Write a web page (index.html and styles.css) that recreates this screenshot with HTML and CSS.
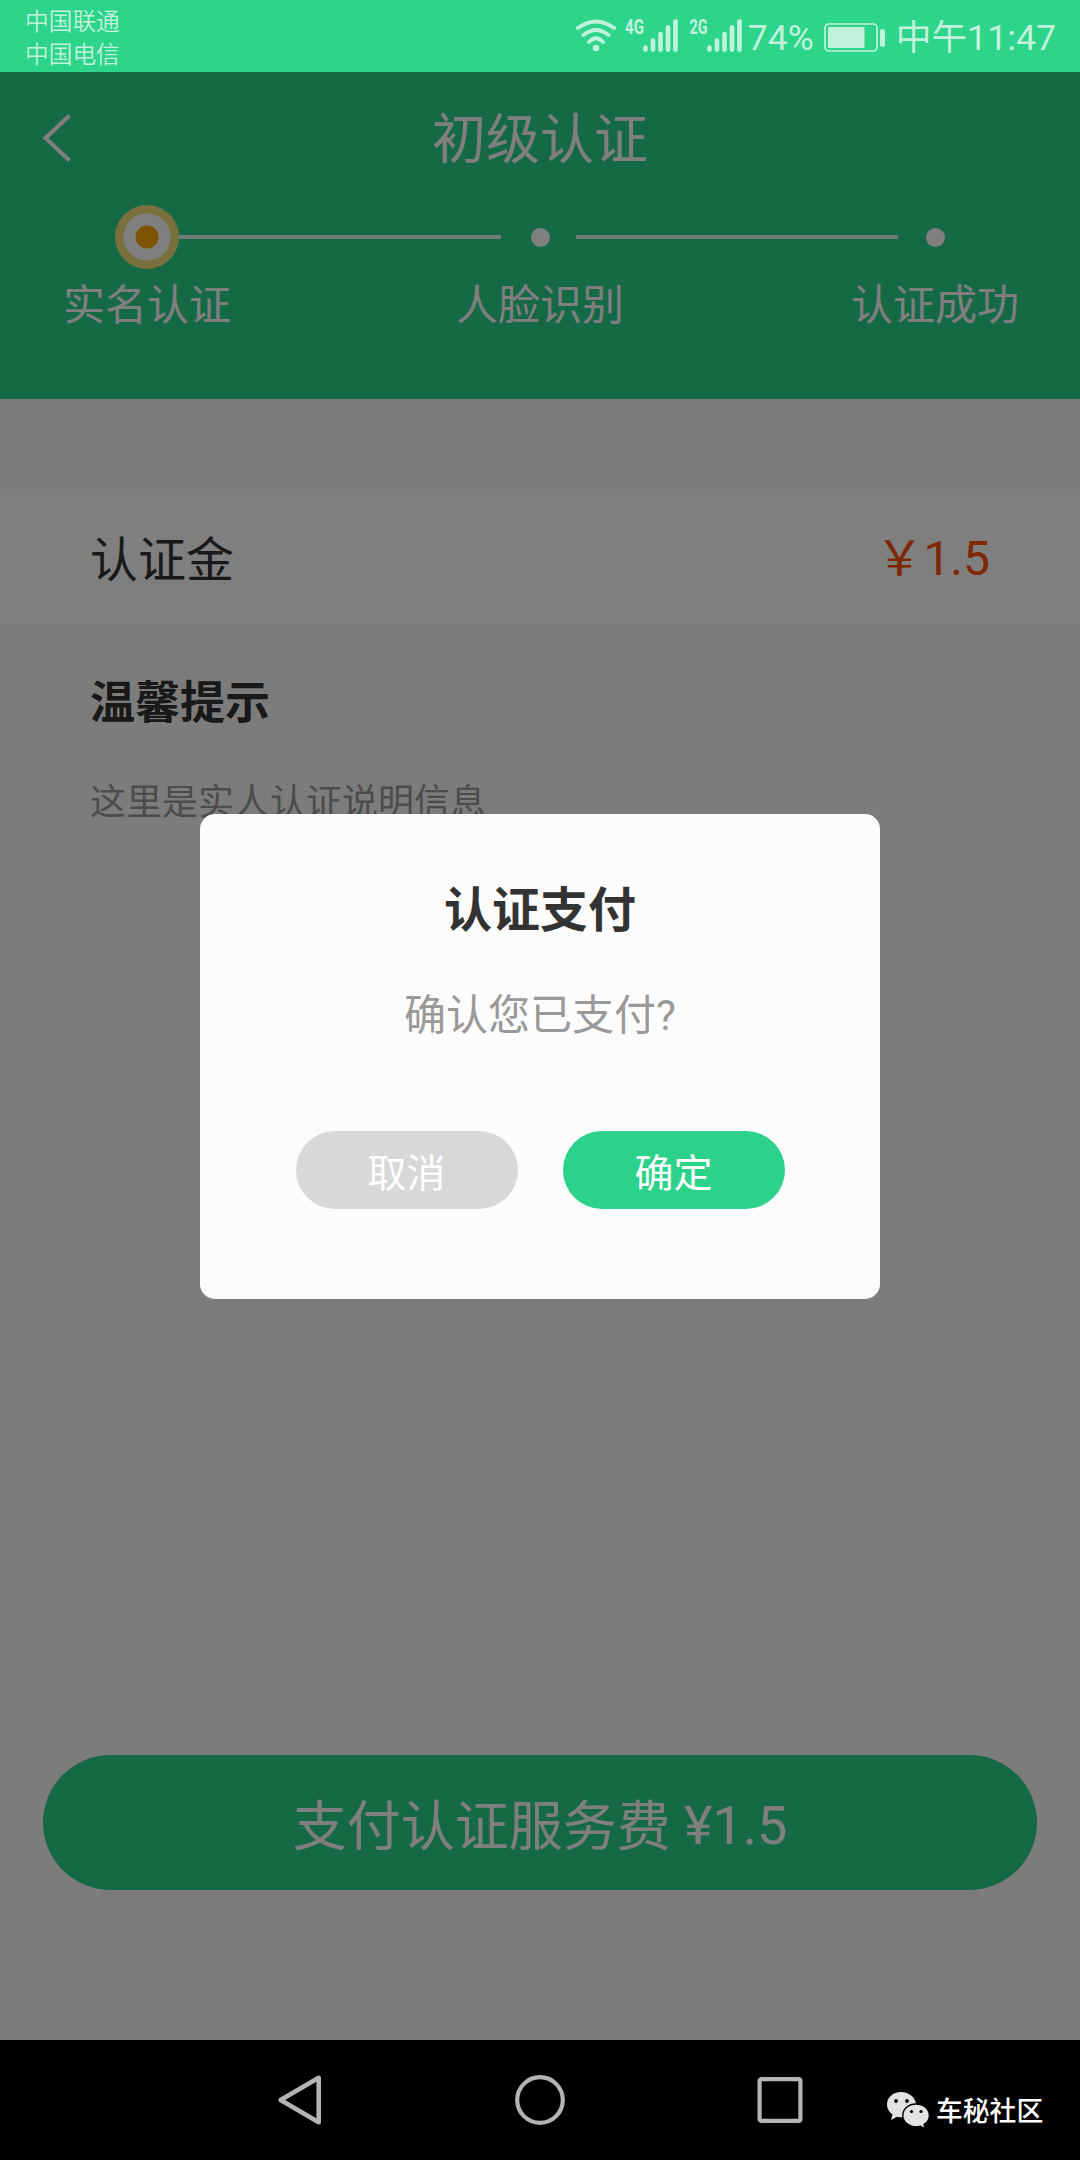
FILE: index.html
```html
<!DOCTYPE html>
<html lang="zh-CN">
<head>
<meta charset="utf-8">
<title>初级认证</title>
<link rel="stylesheet" href="styles.css">
</head>
<body>
<div class="status">
  <div class="carriers"><span>中国联通</span><span>中国电信</span></div>
  <svg class="signals" width="185" height="60" viewBox="0 -12 185 60">
    <g fill="none" stroke="currentColor" stroke-width="4" stroke-linecap="round">
      <path d="M2 10Q20 -3 38 10"/>
      <path d="M7.500 17Q20 7 32.500 17"/>
      <path d="M13 24Q20 16.500 27 24"/>
    </g>
    <circle cx="20" cy="30" r="3.300" fill="currentColor"/>
    <g class="net"><text x="49" y="16" textLength="19" lengthAdjust="spacingAndGlyphs">4G</text><text x="113.500" y="16" textLength="18" lengthAdjust="spacingAndGlyphs">2G</text></g>
    <g stroke="currentColor" stroke-width="4.600" stroke-linecap="round">
      <path d="M69.500 29.500v2.200M77 22.600v9.100M84.500 16v15.700M92 9.300v22.400M99.500 3.300v28.400"/>
      <path d="M133.500 29.500v2.200M141 22.600v9.100M148.500 16v15.700M156 9.300v22.400M163.500 3.300v28.400"/>
    </g>
  </svg>
  <span class="percent">74%</span>
  <svg class="battery" width="62" height="30" viewBox="0 0 62 30">
    <rect x="1" y="1" width="52" height="27" rx="4" fill="none" stroke="currentColor" stroke-width="1.700"/>
    <rect x="4" y="4" width="36.500" height="21" rx="1" fill="currentColor"/>
    <rect x="56" y="6" width="5" height="18" rx="2.500" fill="currentColor"/>
  </svg>
  <span class="time">中午11:47</span>
</div>

<main class="page">
  <header class="header">
    <div class="titlebar">
      <svg class="back" width="30" height="50" viewBox="0 0 30 50"><path d="M27.500 2.500L3.500 25L27.500 47.500" fill="none" stroke="currentColor" stroke-width="4"/></svg>
      <h1>初级认证</h1>
    </div>
    <div class="steps">
      <div class="step"><div class="mark"><span class="ring"></span></div><span>实名认证</span></div>
      <span class="line line-first"></span>
      <div class="step"><div class="mark"><span class="dot"></span></div><span>人脸识别</span></div>
      <span class="line"></span>
      <div class="step"><div class="mark"><span class="dot"></span></div><span>认证成功</span></div>
    </div>
  </header>
  <div class="fee"><span>认证金</span><span class="price">￥1.5</span></div>
  <section class="tips">
    <h2>温馨提示</h2>
    <p>这里是实人认证说明信息</p>
  </section>
  <button class="pay">支付认证服务费 <span class="amount">¥1.5</span></button>

  <div class="mask">
    <div class="dialog">
      <h3>认证支付</h3>
      <p>确认您已支付?</p>
      <div class="actions"><button class="cancel">取消</button><button class="ok">确定</button></div>
    </div>
  </div>
</main>

<nav class="navbar">
  <svg width="50" height="54" viewBox="0 0 50 54"><path d="M42.700 4.800V49.200L4.600 27Z" fill="none" stroke="currentColor" stroke-width="4.600" stroke-linejoin="round"/></svg>
  <svg width="54" height="54" viewBox="0 0 54 54"><circle cx="27" cy="27" r="22.800" fill="none" stroke="currentColor" stroke-width="4.200"/></svg>
  <svg width="50" height="54" viewBox="0 0 50 54"><rect x="4.600" y="6.100" width="40.800" height="41.800" rx="2" fill="none" stroke="currentColor" stroke-width="4.200"/></svg>
  <div class="watermark">
    <svg width="44" height="38" viewBox="0 0 44 38">
      <path d="M15 1C7 1 1 6.500 1 13.500c0 4 2 7.500 5.500 10L5 29l6-3.200c1.500.4 3 .5 4.500.5 8 0 14.500-5.500 14.500-12.600S23 1 15 1z" fill="#e2e2e2"/>
      <path d="M30 13c-7.300 0-13.200 5-13.200 11.400S22.700 35.800 30 35.800c1.500 0 3-.2 4.300-.6l5 2.600-1.300-4.200c3.200-2 5.400-5.300 5.400-9C43.400 18 37.500 13 30 13z" fill="#e2e2e2" stroke="#000" stroke-width="1.400"/>
      <g fill="#000"><circle cx="10" cy="10" r="1.900"/><circle cx="21" cy="10" r="1.900"/><circle cx="25.500" cy="20.500" r="1.600"/><circle cx="35" cy="20.500" r="1.600"/></g>
    </svg>
    <span>车秘社区</span>
  </div>
</nav>
</body>
</html>
```
FILE: styles.css
```css
* { box-sizing: border-box; margin: 0; padding: 0; }
body {
  width: 1080px;
  height: 2160px;
  overflow: hidden;
  display: flex;
  flex-direction: column;
  font-family: Roboto, "Noto Sans CJK SC", sans-serif;
  font-weight: 400;
}
button { border: 0; font: inherit; }

.status {
  height: 72px;
  display: flex;
  align-items: center;
  padding: 0 24px 0 25px;
  background: #2dd48a;
  color: #c0f2dc;
}
.carriers {
  display: flex;
  flex-direction: column;
  padding-top: 6px;
  font-size: 23.700px;
  font-weight: 350;
  line-height: 33px;
  margin-right: auto;
}
.signals { flex: none; margin-right: -13px; }
.net { font: 700 20.500px Roboto, sans-serif; fill: currentColor; }
.percent { width: 76px; padding-top: 4px; font-size: 35.500px; line-height: 44px; }
.battery { flex: none; margin: 3px 10px 0 0; }
.time { padding-top: 3px; font-size: 35.700px; line-height: 44px; white-space: nowrap; }

.page {
  position: relative;
  height: 1968px;
  background: #f8f8f8;
  display: flex;
  flex-direction: column;
}
.header { height: 327px; background: #2dd28a; color: #fff; }
.titlebar {
  height: 132px;
  display: grid;
  grid-template-columns: 96px 1fr 96px;
  align-items: center;
}
.back { margin-left: 42px; }
.titlebar h1 { padding-bottom: 6px; font-size: 54px; font-weight: 400; text-align: center; }
.steps { display: flex; padding-left: 62px; }
.step { width: 170px; flex: none; text-align: center; font-size: 42px; line-height: 62px; }
.mark { height: 66px; margin-bottom: 5px; display: flex; align-items: center; justify-content: center; }
.ring {
  width: 64px;
  height: 64px;
  border-radius: 50%;
  background: radial-gradient(circle, #ffa800 0 11px, #fff 12px 23px, #f4e07c 24px);
}
.dot { width: 19px; height: 19px; border-radius: 50%; background: #fff; }
.line { flex: none; width: 322px; height: 4px; margin: 31px -48px 0 -49px; background: #e6f8f0; }
.line-first { margin-left: -53px; margin-right: -46px; }

.fee {
  height: 135px;
  margin-top: 90px;
  padding: 0 90px 2px;
  background: #fff;
  color: #333;
  display: flex;
  align-items: center;
  justify-content: space-between;
  font-size: 48px;
}
.price { padding-bottom: 3px; color: #ff5000; }
.tips { padding: 47px 90px 0; color: #333; }
.tips h2 { font-size: 45px; line-height: 66px; font-weight: 700; }
.tips p { margin-top: 40px; font-size: 36px; line-height: 52px; color: #999; }
.pay {
  height: 135px;
  margin: auto 43px 150px;
  border-radius: 68px;
  background: #2dd28a;
  color: #fff;
  font-size: 54px;
}
.amount { display: inline-block; transform: translateY(-2px); }

.mask {
  position: absolute;
  inset: 0;
  background: rgba(0, 0, 0, .5);
  display: flex;
  justify-content: center;
  align-items: flex-start;
  padding-top: 742px;
}
.dialog {
  width: 680px;
  height: 485px;
  padding-top: 62px;
  border-radius: 15px;
  background: #fcfcfc;
  text-align: center;
}
.dialog h3 { font-size: 48px; line-height: 70px; font-weight: 700; color: #333; }
.dialog p { margin-top: 39px; font-size: 42px; line-height: 62px; color: #999; }
.actions { margin-top: 84px; display: flex; justify-content: center; gap: 45px; }
.actions button { width: 222px; height: 78px; border-radius: 39px; color: #fff; font-size: 39px; }
.actions .cancel { background: #d8d8d8; }
.actions .ok { background: #2dd28a; }

.navbar {
  height: 120px;
  background: #000;
  color: #b4b4b4;
  display: flex;
  align-items: center;
  padding-left: 276px;
}
.navbar > svg { flex: none; }
.navbar > svg:nth-child(2) { margin-left: 187px; }
.navbar > svg:nth-child(3) { margin-left: 188px; }
.watermark {
  margin: 19px 0 0 81px;
  display: flex;
  align-items: center;
  gap: 6px;
  color: #fff;
  font-size: 26.800px;
  font-weight: 500;
  white-space: nowrap;
}
.watermark svg { flex: none; }
```
